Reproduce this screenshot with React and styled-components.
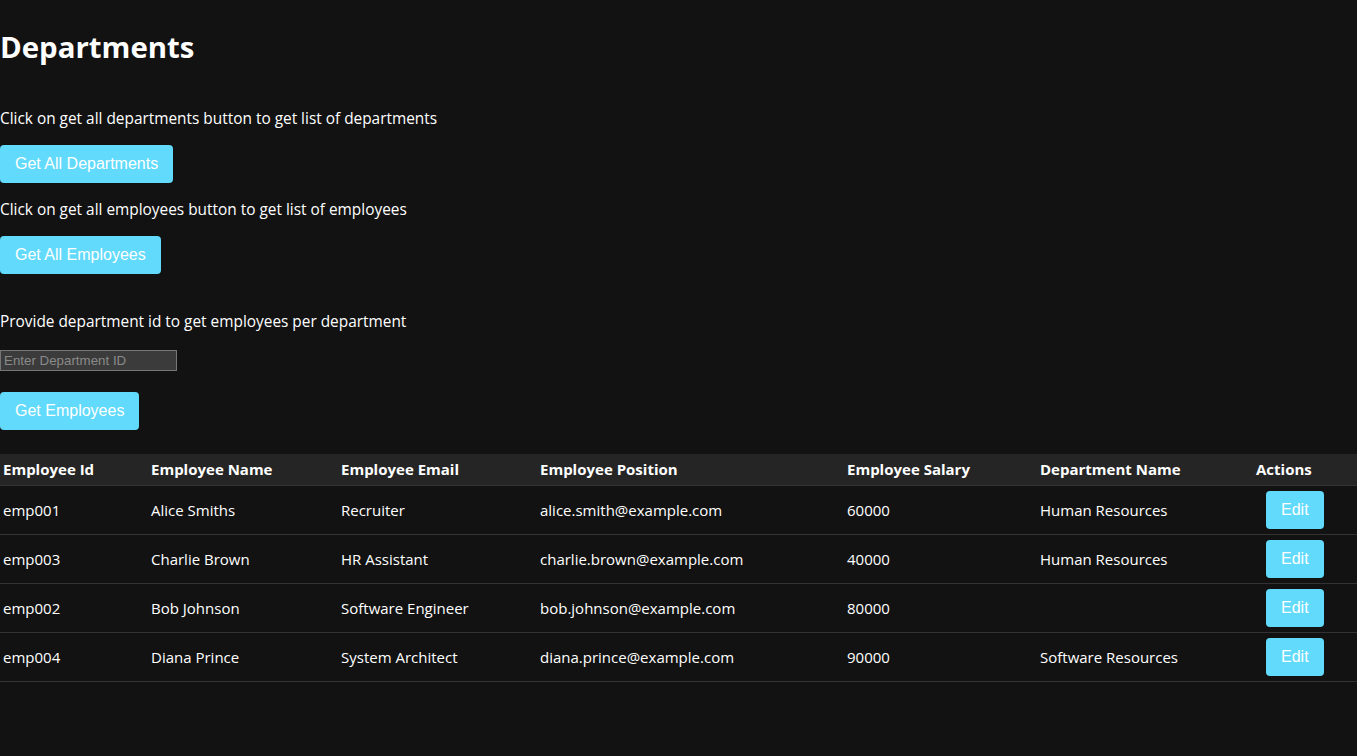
import React, { useState } from 'react'
import styled, { createGlobalStyle } from 'styled-components'

const GlobalStyle = createGlobalStyle`
  html, body {
    margin: 0;
    padding: 0;
    background: #121212;
  }
  body {
    color: #ffffff;
    font-family: "Open Sans", "Noto Sans", sans-serif;
    font-size: 15px;
  }
`

const Page = styled.div`
  display: flex;
  flex-direction: column;
  align-items: flex-start;
  min-height: 756px;
`

const Title = styled.h1`
  margin: 26px 0 0;
  height: 42px;
  line-height: 42px;
  font-size: 29.4px;
  font-weight: 700;
`

const Hint = styled.p`
  margin: ${props => props.$top}px 0 0;
  height: 22px;
  line-height: 22px;
  font-size: 15.4px;
`

const Button = styled.button`
  margin-top: ${props => props.$top || 0}px;
  height: 38px;
  padding: 0 15px;
  border: none;
  border-radius: 4px;
  background: #61dafb;
  color: #ffffff;
  font-family: "Liberation Sans", Arial, sans-serif;
  font-size: 16px;
  cursor: pointer;
`

const IdInput = styled.input`
  margin-top: 17px;
  box-sizing: border-box;
  width: 177px;
  height: 21px;
  padding: 1px 3px;
  background: #3b3b3b;
  border: 1px solid #767676;
  color: #ffffff;
  font-family: "Liberation Sans", Arial, sans-serif;
  font-size: 13.33px;

  &::placeholder {
    color: #8a8a8a;
  }
`

const Table = styled.table`
  margin-top: 24px;
  width: 100%;
  border-collapse: collapse;
  table-layout: fixed;
`

const HeadRow = styled.tr`
  background: #252525;
  height: 31px;
  border-bottom: 1px solid #333333;
`

const HeadCell = styled.th`
  padding: 0 3px;
  text-align: left;
  font-weight: 700;
`

const Row = styled.tr`
  height: 49px;
  border-bottom: 1px solid #333333;
`

const Cell = styled.td`
  padding: 0 3px;
`

const EditButton = styled(Button)`
  margin: 5px 0 5px 10px;
  padding: 0 15px;
`

const columns = [
  { label: 'Employee Id', width: 148 },
  { label: 'Employee Name', width: 190 },
  { label: 'Employee Email', width: 199 },
  { label: 'Employee Position', width: 307 },
  { label: 'Employee Salary', width: 193 },
  { label: 'Department Name', width: 216 },
  { label: 'Actions', width: 104 }
]

const employees = [
  ['emp001', 'Alice Smiths', 'Recruiter', 'alice.smith@example.com', '60000', 'Human Resources'],
  ['emp003', 'Charlie Brown', 'HR Assistant', 'charlie.brown@example.com', '40000', 'Human Resources'],
  ['emp002', 'Bob Johnson', 'Software Engineer', 'bob.johnson@example.com', '80000', ''],
  ['emp004', 'Diana Prince', 'System Architect', 'diana.prince@example.com', '90000', 'Software Resources']
]

const App = () => {
  const [deptId, setDeptId] = useState('')

  return (
    <Page>
      <GlobalStyle />
      <Title>Departments</Title>

      <Hint $top={40}>Click on get all departments button to get list of departments</Hint>
      <Button $top={15}>Get All Departments</Button>

      <Hint $top={16}>Click on get all employees button to get list of employees</Hint>
      <Button $top={15}>Get All Employees</Button>

      <Hint $top={37}>Provide department id to get employees per department</Hint>
      <IdInput
        placeholder="Enter Department ID"
        value={deptId}
        onChange={e => setDeptId(e.target.value)}
      />
      <Button $top={21}>Get Employees</Button>

      <Table>
        <colgroup>
          {columns.map(c => <col key={c.label} style={{ width: c.width }} />)}
        </colgroup>
        <thead>
          <HeadRow>
            {columns.map(c => <HeadCell key={c.label}>{c.label}</HeadCell>)}
          </HeadRow>
        </thead>
        <tbody>
          {employees.map(emp => (
            <Row key={emp[0]}>
              {emp.map((val, i) => <Cell key={i}>{val}</Cell>)}
              <Cell>
                <EditButton>Edit</EditButton>
              </Cell>
            </Row>
          ))}
        </tbody>
      </Table>
    </Page>
  )
}

export default App
